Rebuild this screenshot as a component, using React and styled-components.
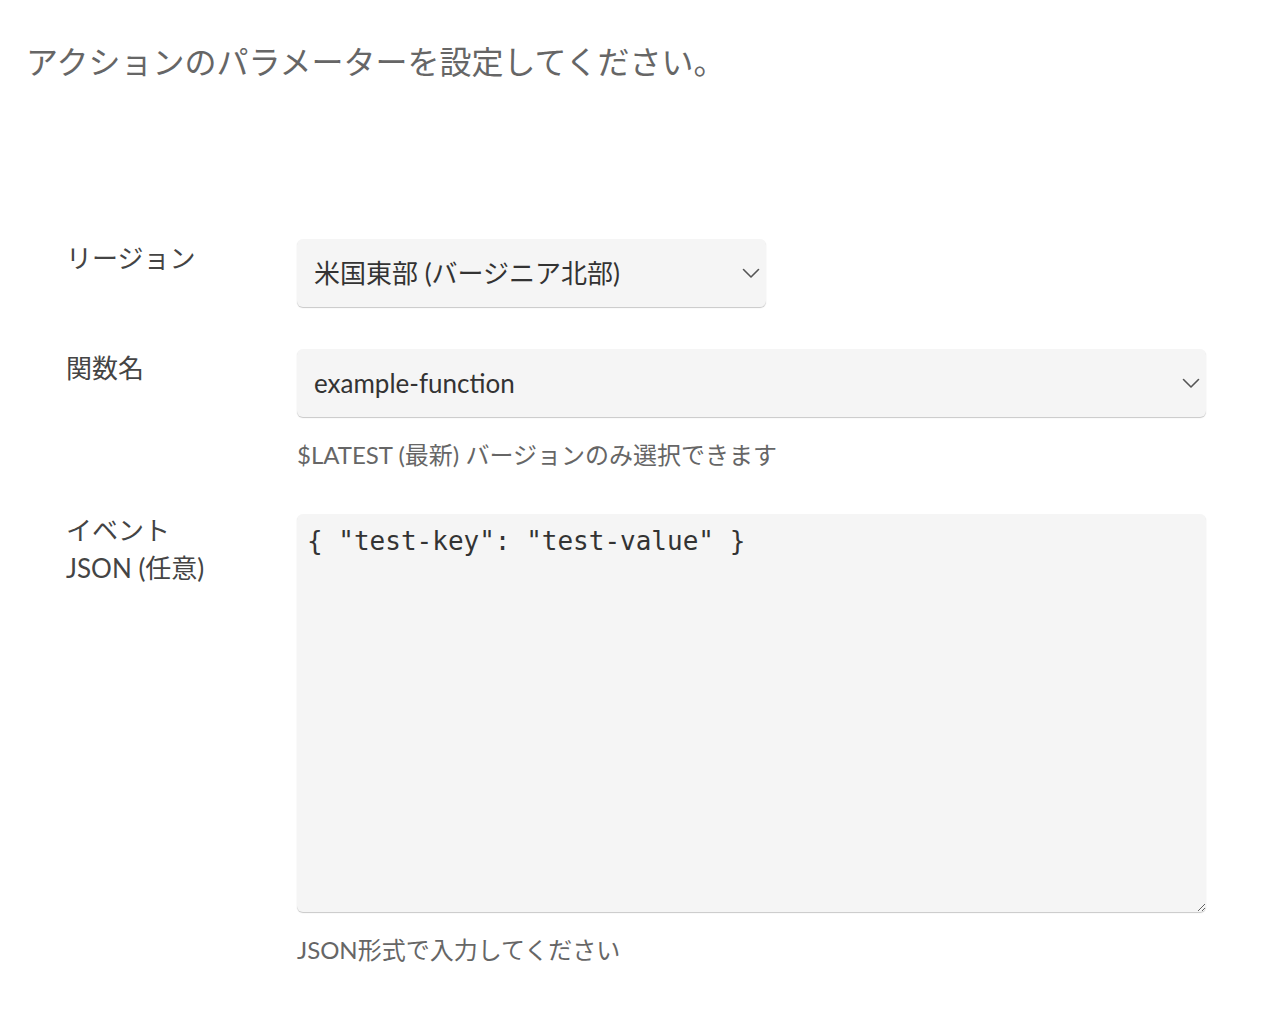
import React, { useState } from 'react';
import styled, { createGlobalStyle } from 'styled-components';

const GlobalStyle = createGlobalStyle`
  html, body {
    margin: 0;
    padding: 0;
    background: #ffffff;
  }
  body {
    font-family: Lato, "Noto Sans CJK JP", sans-serif;
  }
`;

const Page = styled.div`
  padding: 39px 60px 40px 26px;
  box-sizing: border-box;
`;

const Title = styled.h1`
  margin: 0;
  font-size: 32px;
  line-height: 46px;
  font-weight: 400;
  color: #666666;
`;

const Form = styled.div`
  margin-top: 154px;
  padding-left: 40px;
  display: flex;
  flex-direction: column;
  gap: 42px;
`;

const Row = styled.div`
  display: grid;
  grid-template-columns: 231px 1fr;
`;

const Label = styled.div`
  font-size: 26px;
  line-height: 38px;
  color: #444444;
  margin-top: ${(p) => p.$offset || 0}px;
`;

const Field = styled.div`
  display: flex;
  flex-direction: column;
  align-items: flex-start;
`;

const SelectWrap = styled.div`
  position: relative;
  width: ${(p) => p.$width};
`;

const Select = styled.select`
  appearance: none;
  -webkit-appearance: none;
  width: 100%;
  height: 68px;
  box-sizing: border-box;
  border: none;
  border-radius: 6px;
  background: #f5f5f5;
  box-shadow: 0 1px 1px rgba(0, 0, 0, 0.22);
  padding: 0 48px 0 17px;
  font-family: Lato, "Noto Sans CJK JP", sans-serif;
  font-size: 26px;
  color: #333333;
  outline: none;
`;

const Chevron = styled.svg`
  position: absolute;
  right: 6px;
  top: 50%;
  width: 18px;
  height: 11px;
  margin-top: -5px;
  pointer-events: none;
`;

const TextArea = styled.textarea`
  width: 100%;
  height: 398px;
  box-sizing: border-box;
  border: none;
  border-radius: 6px;
  background: #f5f5f5;
  box-shadow: 0 1px 1px rgba(0, 0, 0, 0.22);
  padding: 9px 10px;
  font-family: "DejaVu Sans Mono", "Liberation Mono", monospace;
  font-size: 26px;
  line-height: 36px;
  color: #333333;
  outline: none;
  resize: vertical;
`;

const Help = styled.div`
  margin-top: 21px;
  font-size: 24px;
  line-height: 34px;
  color: #666666;
`;

const Dropdown = ({ width, value, options, onChange }) => (
  <SelectWrap $width={width}>
    <Select value={value} onChange={(e) => onChange(e.target.value)}>
      {options.map((o) => (
        <option key={o} value={o}>{o}</option>
      ))}
    </Select>
    <Chevron viewBox="0 0 18 11">
      <path d="M1.5 1.5 L9 9 L16.5 1.5" fill="none" stroke="#555" strokeWidth="1.6" strokeLinecap="round" strokeLinejoin="round" />
    </Chevron>
  </SelectWrap>
);

const App = () => {
  const [region, setRegion] = useState('米国東部 (バージニア北部)');
  const [fn, setFn] = useState('example-function');
  const [json, setJson] = useState('{ "test-key": "test-value" }');

  return (
    <Page>
      <GlobalStyle />
      <Title>アクションのパラメーターを設定してください。</Title>

      <Form>
        <Row>
          <Label>リージョン</Label>
          <Field>
            <Dropdown
              width="469px"
              value={region}
              onChange={setRegion}
              options={['米国東部 (バージニア北部)', '米国西部 (オレゴン)', 'アジアパシフィック (東京)']}
            />
          </Field>
        </Row>

        <Row>
          <Label>関数名</Label>
          <Field>
            <Dropdown
              width="100%"
              value={fn}
              onChange={setFn}
              options={['example-function', 'another-function']}
            />
            <Help>$LATEST (最新) バージョンのみ選択できます</Help>
          </Field>
        </Row>

        <Row>
          <Label $offset={-3}>
            イベント
            <br />
            JSON (任意)
          </Label>
          <Field>
            <TextArea value={json} onChange={(e) => setJson(e.target.value)} spellCheck={false} />
            <Help>JSON形式で入力してください</Help>
          </Field>
        </Row>
      </Form>
    </Page>
  );
};

export default App;
